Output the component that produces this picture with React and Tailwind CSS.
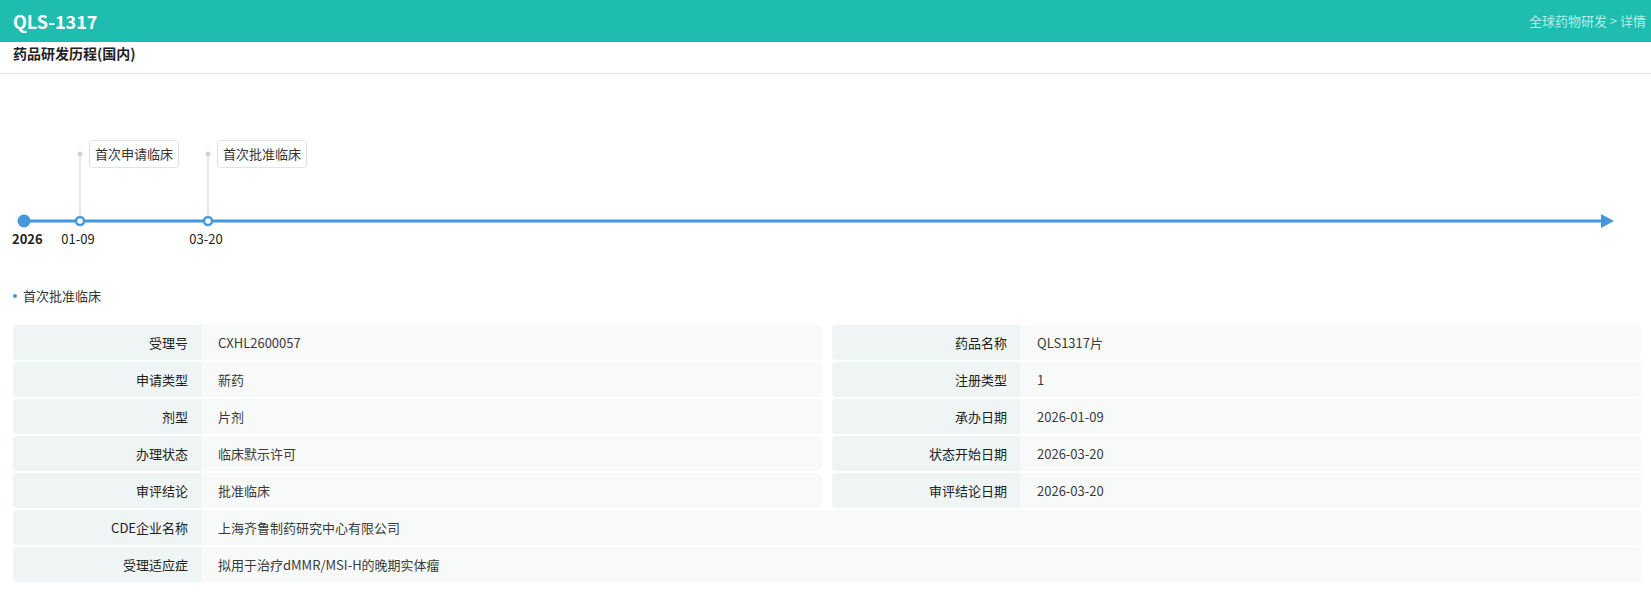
import React from "react";

const rows = [
  [
    ["受理号", "CXHL2600057"],
    ["药品名称", "QLS1317片"],
  ],
  [
    ["申请类型", "新药"],
    ["注册类型", "1"],
  ],
  [
    ["剂型", "片剂"],
    ["承办日期", "2026-01-09"],
  ],
  [
    ["办理状态", "临床默示许可"],
    ["状态开始日期", "2026-03-20"],
  ],
  [
    ["审评结论", "批准临床"],
    ["审评结论日期", "2026-03-20"],
  ],
];

const fullRows = [
  ["CDE企业名称", "上海齐鲁制药研究中心有限公司"],
  ["受理适应症", "拟用于治疗dMMR/MSI-H的晚期实体瘤"],
];

const events = [
  { x: 80, date: "01-09", label: "首次申请临床" },
  { x: 208, date: "03-20", label: "首次批准临床" },
];

const Cell = ({ label, value, full }) => (
  <div className={`flex h-[35px] rounded-[4px] overflow-hidden ${full ? "col-span-2" : ""}`}>
    <div className="w-[190px] shrink-0 flex items-center justify-end pr-[14px] bg-[#eef5f4] text-[#222] border-r border-white">
      {label}
    </div>
    <div className="flex-1 flex items-center pl-[15px] bg-[#f8fafa] text-[#3a3a3a]">{value}</div>
  </div>
);

const Timeline = () => (
  <div className="relative h-[212px] text-[13px]">
    <svg className="absolute left-0 top-0" width="1651" height="212">
      <line x1="24" y1="147" x2="1604" y2="147" stroke="#4598dc" strokeWidth="3" />
      <polygon points="1601,140 1614,147 1601,154" fill="#4598dc" />
      <circle cx="24" cy="147" r="6.5" fill="#4598dc" />
      {events.map((e) => (
        <g key={e.x}>
          <line x1={e.x} y1="80" x2={e.x} y2="143" stroke="#cfd2d6" strokeWidth="1" />
          <circle cx={e.x} cy="80" r="2.5" fill="#cfd2d6" />
          <circle cx={e.x} cy="147" r="4" fill="#fff" stroke="#4598dc" strokeWidth="2.5" />
        </g>
      ))}
    </svg>
    <div className="absolute top-[155px] left-[12px] w-[30px] text-center font-bold text-[#222] leading-5">2026</div>
    {events.map((e) => (
      <React.Fragment key={e.date}>
        <div
          className="absolute top-[155px] w-[40px] text-center text-[#222] leading-5"
          style={{ left: e.x - 22 }}
        >
          {e.date}
        </div>
        <div
          className="absolute top-[66px] h-[28px] px-[5px] flex items-center border border-[#dfe4ea] rounded-[3px] bg-white text-[#333]"
          style={{ left: e.x + 9 }}
        >
          {e.label}
        </div>
      </React.Fragment>
    ))}
  </div>
);

export default function App() {
  return (
    <div className="w-[1651px] min-h-[598px] bg-white font-['Noto_Sans_CJK_SC','Noto_Sans',sans-serif] text-[13px]">
      <header className="h-[42px] bg-[#1fbdb0] flex items-center justify-between pl-[13px] pr-[5px]">
        <h1 className="text-white text-[18px] font-bold leading-none">QLS-1317</h1>
        <span className="text-[#b4efe7] text-[13px]">全球药物研发 &gt; 详情</span>
      </header>

      <div className="h-[32px] border-b border-[#e6e6e6] pl-[13px] pt-px">
        <h2 className="text-[14px] font-bold text-[#222] leading-5">药品研发历程(国内)</h2>
      </div>

      <Timeline />

      <div className="flex items-center h-5 pl-[13px] text-[#333]">
        <span className="w-[4px] h-[4px] rounded-full bg-[#4598dc] mr-[6px]" />
        首次批准临床
      </div>

      <div className="mt-[19px] pl-[13px] pr-[10px] grid grid-cols-2 gap-x-[10px] gap-y-[2px]">
        {rows.map((pair) =>
          pair.map(([l, v]) => <Cell key={l} label={l} value={v} />)
        )}
        {fullRows.map(([l, v]) => (
          <Cell key={l} label={l} value={v} full />
        ))}
      </div>
    </div>
  );
}
